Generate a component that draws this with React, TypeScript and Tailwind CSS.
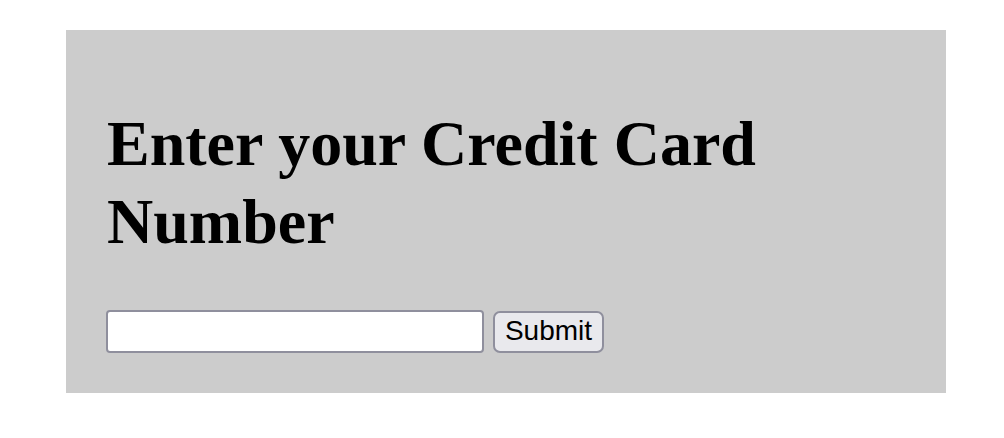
import React from "react";

export default function App() {
  return (
    <div className="w-[1004px] h-[438px] bg-white pt-[30px] pl-[66px]">
      <div className="w-[880px] h-[363px] bg-[#cccccc] pl-[41px] pt-[75px]">
        <h1
          className="text-[64px] leading-[78px] font-bold text-black w-[700px]"
          style={{ fontFamily: '"Liberation Serif", "Times New Roman", serif' }}
        >
          Enter your Credit Card Number
        </h1>
        <div className="flex items-center mt-[49px] gap-[9px] -ml-px">
          <input
            type="text"
            className="w-[378px] h-[43px] bg-white border-2 border-[#8f8f9d] rounded-[4px] outline-none"
          />
          <button
            className="w-[111px] h-[42px] bg-[#e9e9ed] border-2 border-[#8f8f9d] rounded-[7px] text-[28px] leading-none text-black flex items-center justify-center pb-px"
            style={{ fontFamily: '"Liberation Sans", Arial, sans-serif' }}
          >
            Submit
          </button>
        </div>
      </div>
    </div>
  );
}
